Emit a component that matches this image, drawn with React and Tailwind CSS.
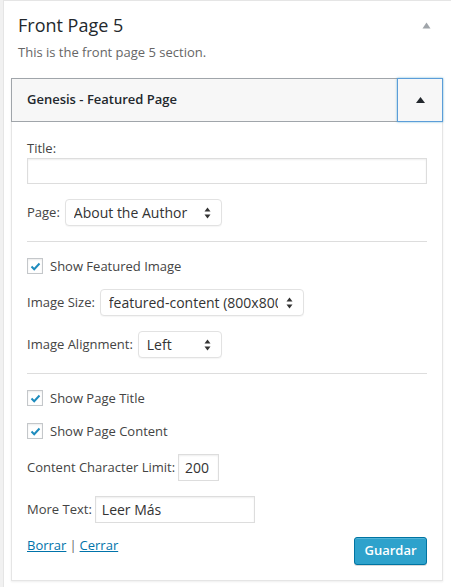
import React from "react";

const Arrows = () => (
  <svg width="7" height="12" viewBox="0 0 7 12" className="shrink-0">
    <path d="M3.5 0.5 L6.5 4.5 H0.5 Z" fill="#333" />
    <path d="M3.5 11.5 L6.5 7.5 H0.5 Z" fill="#333" />
  </svg>
);

const Select = ({ value, width }) => (
  <div
    className={`flex h-[27px] items-center justify-between rounded-[4px] border border-[#e2e2e2] bg-white pl-[8px] pr-[10px] text-[14px] text-[#333] shadow-[0_1px_1px_rgba(0,0,0,0.04)] ${width}`}
  >
    <span className="mr-[8px] min-w-0 flex-1 overflow-hidden whitespace-nowrap">{value}</span>
    <Arrows />
  </div>
);

const Check = ({ label }) => (
  <label className="flex items-center gap-[7px] text-[13px] leading-[16px] text-[#444]">
    <span className="flex h-[16px] w-[16px] items-center justify-center border border-[#c4c7ca] bg-white shadow-[inset_0_1px_2px_rgba(0,0,0,0.08)]">
      <svg width="11" height="9" viewBox="0 0 11 9">
        <path d="M1.5 4.5 L4.2 7.2 L9.5 1.5" stroke="#1e8cbe" strokeWidth="2" fill="none" />
      </svg>
    </span>
    {label}
  </label>
);

export default function App() {
  return (
    <div
      className="min-h-[587px] bg-[#f1f1f1] pl-[3px]"
      style={{ fontFamily: '"Open Sans", "Noto Sans", sans-serif' }}
    >
      <div className="min-h-[587px] border-l border-t border-[#e5e5e5] bg-white px-[7px] pt-[12px]">
        <div className="flex items-center justify-between pl-[7px] pr-[13px]">
          <h2 className="text-[18px] leading-[24px] text-[#23282d]">Front Page 5</h2>
          <svg width="9" height="7" viewBox="0 0 9 7">
            <path d="M4.5 0.5 L8.5 6.5 H0.5 Z" fill="#a0a5aa" />
          </svg>
        </div>
        <p className="mt-[5px] pl-[7px] text-[13px] leading-[20px] text-[#666]">
          This is the front page 5 section.
        </p>

        <div className="mt-[16px] w-[432px] shadow-[0_1px_2px_rgba(0,0,0,0.07)]">
          <div className="flex h-[44px] items-stretch border border-[#a0a5aa] bg-[#f7f7f7]">
            <div className="flex flex-1 items-center pl-[15px] text-[13px] font-semibold text-[#23282d]">
              Genesis - Featured Page
            </div>
            <div className="-my-px -mr-px flex w-[46px] items-center justify-center border border-[#5b9dd9] shadow-[0_0_2px_rgba(30,140,190,0.6)]">
              <svg width="9" height="6" viewBox="0 0 9 6">
                <path d="M4.5 0 L9 6 H0 Z" fill="#23282d" />
              </svg>
            </div>
          </div>

          <div className="border-x border-b border-[#e5e5e5] bg-white px-[15px] pb-[15px] pt-[16px] text-[13px] text-[#444]">
            <div className="leading-[20px]">Title:</div>
            <div className="h-[26px] w-full border border-[#ddd] bg-white shadow-[inset_0_1px_2px_rgba(0,0,0,0.07)]" />

            <div className="mt-[15px] flex items-center gap-[5px]">
              <span>Page:</span>
              <Select value="About the Author" width="w-[157px]" />
            </div>

            <hr className="mt-[15px] border-t border-[#ddd]" />

            <div className="mt-[16px]">
              <Check label="Show Featured Image" />
            </div>

            <div className="mt-[15px] flex items-center gap-[5px]">
              <span>Image Size:</span>
              <Select value="featured-content (800x800)" width="w-[204px]" />
            </div>

            <div className="mt-[15px] flex items-center gap-[5px]">
              <span>Image Alignment:</span>
              <Select value="Left" width="w-[84px]" />
            </div>

            <hr className="mt-[15px] border-t border-[#ddd]" />

            <div className="mt-[16px]">
              <Check label="Show Page Title" />
            </div>
            <div className="mt-[17px]">
              <Check label="Show Page Content" />
            </div>

            <div className="mt-[15px] flex items-center gap-[3px]">
              <span>Content Character Limit:</span>
              <div className="flex h-[27px] w-[41px] items-center border border-[#ddd] pl-[6px] text-[14px] text-[#333] shadow-[inset_0_1px_2px_rgba(0,0,0,0.07)]">
                200
              </div>
            </div>

            <div className="mt-[15px] flex items-center gap-[3px]">
              <span>More Text:</span>
              <div className="flex h-[27px] w-[160px] items-center border border-[#ddd] pl-[6px] text-[14px] text-[#333] shadow-[inset_0_1px_2px_rgba(0,0,0,0.07)]">
                Leer Más
              </div>
            </div>

            <div className="mt-[14px] flex items-start justify-between">
              <div className="mt-[-1px] flex items-center gap-[3px] text-[13px]">
                <a className="text-[#0073aa] underline">Borrar</a>
                <span className="text-[#666]">|</span>
                <a className="text-[#0073aa] underline">Cerrar</a>
              </div>
              <button className="h-[28px] w-[73px] rounded-[3px] border border-[#0074a2] bg-[#2ea2cc] text-[13px] font-semibold text-white shadow-[inset_0_1px_0_rgba(120,200,230,0.5),0_1px_0_rgba(0,0,0,0.15)]">
                Guardar
              </button>
            </div>
          </div>
        </div>
      </div>
    </div>
  );
}
